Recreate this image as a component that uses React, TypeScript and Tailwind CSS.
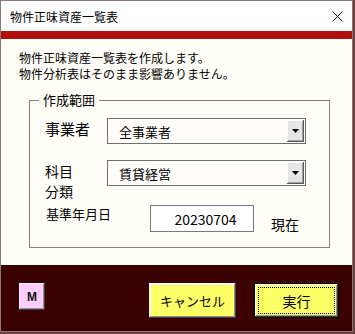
import React from "react";

const font = { fontFamily: '"Noto Sans CJK JP", "Noto Sans", sans-serif' };

function Combo({ value }: { value: string }) {
  return (
    <div className="flex h-[26px] w-[199px] items-stretch border border-[#6f6f6f] bg-[#fffefa]">
      <div className="flex flex-1 items-center pl-[11px] text-[13px] leading-none text-black">{value}</div>
      <div className="m-[1px] flex w-[17px] items-center justify-center bg-[#e6e6e6] shadow-[inset_-1px_-1px_#5a5a5a,inset_1px_1px_#ffffff,inset_-2px_-2px_#a0a0a0]">
        <svg width="7" height="4" viewBox="0 0 7 4">
          <polygon points="0,0 7,0 3.5,4" fill="#000" />
        </svg>
      </div>
    </div>
  );
}

export default function App() {
  return (
    <div className="flex h-[334px] w-[355px] items-start bg-[#6a4040]" style={font}>
      <div className="flex h-[332px] w-[353px] flex-col border border-[#8a7878] bg-white">
        {/* title bar */}
        <div className="flex h-[30px] shrink-0 items-center justify-between bg-white pl-[9px] pr-[9px] pt-[1px]">
          <span className="text-[12px] leading-none text-black">物件正味資産一覧表</span>
          <svg width="11" height="11" viewBox="0 0 11 11">
            <line x1="0.5" y1="0.5" x2="10.5" y2="10.5" stroke="#111" strokeWidth="1" />
            <line x1="10.5" y1="0.5" x2="0.5" y2="10.5" stroke="#111" strokeWidth="1" />
          </svg>
        </div>
        {/* red band */}
        <div className="h-[8px] shrink-0 bg-[#b20d0d]" />
        {/* content */}
        <div className="flex h-[226px] shrink-0 flex-col bg-[#fffdf7]">
          <div className="ml-[18px] mt-[11px] text-[12px] leading-[16px] text-black">
            <div>物件正味資産一覧表を作成します。</div>
            <div>物件分析表はそのまま影響ありません。</div>
          </div>
          <div className="relative ml-[28px] mt-[18px] h-[148px] w-[301px] border border-[#8e7f7f]">
            <span className="absolute left-[9px] top-[-10px] bg-[#fffdf7] px-[4px] text-[13px] leading-[18px] text-black">
              作成範囲
            </span>
            <div className="flex flex-col pl-[15px] pt-[17px]">
              {/* row 1 */}
              <div className="flex items-start">
                <div className="mt-[1px] w-[62px] text-[15px] leading-[20px] text-black">事業者</div>
                <Combo value="全事業者" />
              </div>
              {/* row 2 */}
              <div className="mt-[16px] flex items-start">
                <div className="mt-[1px] w-[62px] text-[14px] leading-[20px] text-black">
                  <div>科目</div>
                  <div>分類</div>
                </div>
                <Combo value="賃貸経営" />
              </div>
              {/* row 3 */}
              <div className="mt-[4px] flex items-start">
                <div className="ml-[1px] mt-[1px] w-[104px] text-[13px] leading-[16px] text-black">基準年月日</div>
                <div className="flex h-[27px] w-[104px] items-center justify-center border border-[#7a7a7a] bg-white pl-[7px] text-[14px] leading-none text-black">
                  20230704
                </div>
                <div className="ml-[17px] mt-[10px] text-[14px] leading-[18px] text-black">現在</div>
              </div>
            </div>
          </div>
        </div>
        {/* footer */}
        <div className="flex flex-1 items-start bg-[#3b0000] pt-[18px]">
          <div
            className="ml-[18px] flex h-[27px] w-[26px] items-center justify-center bg-[#ffccff] text-[12px] font-bold text-[#111] shadow-[inset_-1px_-1px_#404040,inset_1px_1px_#ffffff,inset_-2px_-2px_#909090]"
            style={{ fontFamily: '"Liberation Sans", Arial, sans-serif' }}
          >
            M
          </div>
          <div className="ml-[104px] flex h-[35px] w-[87px] items-center justify-center bg-[#ffff66] text-[13px] leading-none text-black shadow-[inset_-1px_-1px_#404040,inset_1px_1px_#ffffff,inset_-2px_-2px_#909090,inset_2px_2px_#f0f0f0]">
            キャンセル
          </div>
          <div className="ml-[18px] flex h-[35px] w-[85px] items-center justify-center border border-black bg-[#ffff66] p-[3px] shadow-[inset_-1px_-1px_#404040,inset_1px_1px_#ffffff,inset_-2px_-2px_#909090]">
            <div className="flex h-full w-full items-center justify-center border border-dotted border-black text-[14px] leading-none text-black">
              実行
            </div>
          </div>
        </div>
      </div>
    </div>
  );
}
